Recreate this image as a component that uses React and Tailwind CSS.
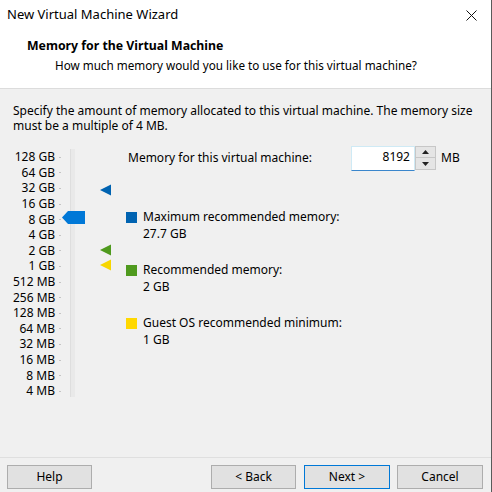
import React from "react";

const labels = ["128 GB","64 GB","32 GB","16 GB","8 GB","4 GB","2 GB","1 GB","512 MB","256 MB","128 MB","64 MB","32 MB","16 MB","8 MB","4 MB"];

function Tri({ color, top }) {
  return (
    <svg className="absolute left-0" style={{ top }} width="12" height="12" viewBox="0 0 12 12">
      <polygon points="0,6 11,0.5 11,11.5" fill={color} />
    </svg>
  );
}

function Legend({ color, title, value }) {
  return (
    <div className="flex items-start">
      <div className="w-[11px] h-[11px] mt-[3.5px]" style={{ background: color }} />
      <div className="ml-[6px] leading-[17px]">
        <div>{title}</div>
        <div>{value}</div>
      </div>
    </div>
  );
}

function Btn({ children, primary, w }) {
  return (
    <div
      className={`h-[24px] flex items-center justify-center bg-[#e1e1e1] border ${primary ? "border-[#0078d7]" : "border-[#adadad]"}`}
      style={{ width: w }}
    >
      {children}
    </div>
  );
}

export default function App() {
  return (
    <div className="w-[492px] h-[492px] bg-[#f0f0f0] flex flex-col text-[12px] text-black font-['Noto_Sans',sans-serif] border-r border-[#5a5a5a] overflow-hidden">
      <div className="h-[30px] bg-white flex items-center justify-between pl-[7px] pr-[14px] shrink-0">
        <span className="text-[13px]">New Virtual Machine Wizard</span>
        <svg width="11" height="11" viewBox="0 0 11 11"><path d="M0.5 0.5 L10.5 10.5 M10.5 0.5 L0.5 10.5" stroke="#111" strokeWidth="1" /></svg>
      </div>
      <div className="h-[59px] bg-white border-b border-[#dcdcdc] shrink-0 pt-[7px]">
        <div className="pl-[27px] font-bold leading-[18px] text-[12.3px]">Memory for the Virtual Machine</div>
        <div className="pl-[55px] leading-[18px] mt-[1px] text-[11.7px]">How much memory would you like to use for this virtual machine?</div>
      </div>
      <div className="flex-1 pl-[13px] pt-[14px]">
        <div className="leading-[15px]">
          Specify the amount of memory allocated to this virtual machine. The memory size<br />must be a multiple of 4 MB.
        </div>
        <div className="flex items-start mt-[16.5px]">
          <div className="w-[48px]">
            {labels.map((l) => (
              <div key={l} className="h-[15.6px] flex items-center justify-end whitespace-nowrap">
                <span>{l}</span>
                <span className="ml-[4px] w-[2px] h-[1px] bg-[#c4c4c4]" />
              </div>
            ))}
          </div>
          <div className="relative ml-[9px] -mt-[1px] w-[5px] h-[248px] bg-[#e9e9e9] border-l border-[#dedede]">
            <svg className="absolute" style={{ left: -9, top: 62 }} width="23" height="13" viewBox="0 0 23 13">
              <polygon points="0,6.5 6,0 23,0 23,13 6,13" fill="#0078d7" />
            </svg>
          </div>
          <div className="relative ml-[25px] w-[12px] h-[248px] -mt-[1px]">
            <Tri color="#0063b1" top={35} />
            <Tri color="#4f9a1e" top={95} />
            <Tri color="#f7d600" top={110} />
          </div>
          <div className="ml-[14px] flex flex-col">
            <div className="flex items-center h-[25px] -mt-[4px]">
              <span className="ml-[2px] w-[223px]">Memory for this virtual machine:</span>
              <div className="w-[64px] h-[25px] bg-white border border-[#cfeaf5] border-b-[#3a86cc] flex items-center justify-end pr-[4px] pb-[3px]">8192</div>
              <div className="w-[21px] h-[24px] flex flex-col">
                <div className="h-[12px] bg-[#e5e5e5] border border-[#c7c7c7] flex items-center justify-center">
                  <svg width="7" height="4" viewBox="0 0 7 4"><polygon points="3.5,0 7,4 0,4" fill="#222" /></svg>
                </div>
                <div className="h-[12px] bg-[#e5e5e5] border border-t-0 border-[#c7c7c7] flex items-center justify-center">
                  <svg width="7" height="4" viewBox="0 0 7 4"><polygon points="0,0 7,0 3.5,4" fill="#222" /></svg>
                </div>
              </div>
              <span className="ml-[5px]">MB</span>
            </div>
            <div className="mt-[37.5px] flex flex-col gap-[19px]">
              <Legend color="#0063b1" title="Maximum recommended memory:" value="27.7 GB" />
              <Legend color="#4f9a1e" title="Recommended memory:" value="2 GB" />
              <Legend color="#ffd800" title="Guest OS recommended minimum:" value="1 GB" />
            </div>
          </div>
        </div>
      </div>
      <div className="h-[35px] shrink-0 border-t border-[#dfdfdf] pt-[7px] pl-[7px] flex">
        <Btn w={85}>Help</Btn>
        <div className="ml-[119px]"><Btn w={85}>&lt; Back</Btn></div>
        <div className="ml-[8px]"><Btn w={86} primary>Next &gt;</Btn></div>
        <div className="ml-[7px]"><Btn w={86}>Cancel</Btn></div>
      </div>
    </div>
  );
}
